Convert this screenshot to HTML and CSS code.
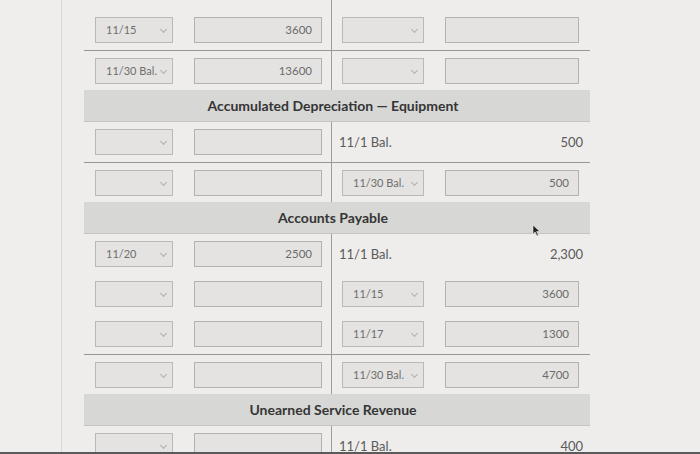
FILE: index.html
```html
<!DOCTYPE html>
<html lang="en">
<head>
<meta charset="utf-8">
<title>T-Accounts</title>
<link rel="stylesheet" href="styles.css">
</head>
<body>
<div class="page">
  <aside class="side"></aside>
  <main class="main">
    <div class="ledger">
      <div class="trow spacer"><div class="half left"></div><div class="half right"></div></div>
      <div class="trow">
        <div class="half left">
          <div class="sel">11/15<span class="chev"></span></div>
          <div class="inp">3600</div>
        </div>
        <div class="half right">
          <div class="sel wide"><span class="chev"></span></div>
          <div class="inp wide"></div>
        </div>
      </div>
      <div class="trow rule">
        <div class="half left">
          <div class="sel">11/30 Bal.<span class="chev"></span></div>
          <div class="inp">13600</div>
        </div>
        <div class="half right">
          <div class="sel wide"><span class="chev"></span></div>
          <div class="inp wide"></div>
        </div>
      </div>

      <div class="thead">Accumulated Depreciation — Equipment</div>
      <div class="trow">
        <div class="half left">
          <div class="sel"><span class="chev"></span></div>
          <div class="inp"></div>
        </div>
        <div class="half right text">
          <span class="lbl">11/1 Bal.</span><span class="val">500</span>
        </div>
      </div>
      <div class="trow rule">
        <div class="half left">
          <div class="sel"><span class="chev"></span></div>
          <div class="inp"></div>
        </div>
        <div class="half right">
          <div class="sel wide">11/30 Bal.<span class="chev"></span></div>
          <div class="inp wide">500</div>
        </div>
      </div>

      <div class="thead">Accounts Payable</div>
      <div class="trow">
        <div class="half left">
          <div class="sel">11/20<span class="chev"></span></div>
          <div class="inp">2500</div>
        </div>
        <div class="half right text">
          <span class="lbl">11/1 Bal.</span><span class="val">2,300</span>
        </div>
      </div>
      <div class="trow">
        <div class="half left">
          <div class="sel"><span class="chev"></span></div>
          <div class="inp"></div>
        </div>
        <div class="half right">
          <div class="sel wide">11/15<span class="chev"></span></div>
          <div class="inp wide">3600</div>
        </div>
      </div>
      <div class="trow">
        <div class="half left">
          <div class="sel"><span class="chev"></span></div>
          <div class="inp"></div>
        </div>
        <div class="half right">
          <div class="sel wide">11/17<span class="chev"></span></div>
          <div class="inp wide">1300</div>
        </div>
      </div>
      <div class="trow rule">
        <div class="half left">
          <div class="sel"><span class="chev"></span></div>
          <div class="inp"></div>
        </div>
        <div class="half right">
          <div class="sel wide">11/30 Bal.<span class="chev"></span></div>
          <div class="inp wide">4700</div>
        </div>
      </div>

      <div class="thead">Unearned Service Revenue</div>
      <div class="trow">
        <div class="half left">
          <div class="sel"><span class="chev"></span></div>
          <div class="inp"></div>
        </div>
        <div class="half right text">
          <span class="lbl">11/1 Bal.</span><span class="val">400</span>
        </div>
      </div>
    </div>
  </main>
  <svg class="cursor" width="9" height="13" viewBox="0 0 9 13"><path d="M1 1 L1 10 L3.2 8 L5 12 L6.4 11.3 L4.7 7.5 L7.8 7.5 Z" fill="#222" stroke="#eee" stroke-width="0.6"/></svg>
  <div class="bezel"></div>
</div>
</body>
</html>
```

FILE: styles.css
```css
html, body {
  margin: 0;
  padding: 0;
}
body {
  background: #eeedeb;
  font-family: Lato, "Open Sans", "Liberation Sans", sans-serif;
  color: #555;
  overflow: hidden;
}
.page {
  position: relative;
  display: flex;
  width: 700px;
  height: 454px;
  overflow: hidden;
}
.side {
  width: 61px;
  flex: none;
  background: #efeeed;
  border-right: 1px solid #dad9d7;
}
.main {
  flex: 1;
  padding-left: 22px;
}
.ledger {
  width: 506px;
}
.trow {
  display: grid;
  grid-template-columns: 248px 258px;
  height: 40px;
}
.trow.spacer {
  height: 10px;
}
.trow.rule {
  border-top: 1px solid #979795;
  height: 39px;
}
.half {
  display: flex;
  align-items: center;
  gap: 21px;
}
.half.left {
  border-right: 1px solid #9e9e9c;
  padding-left: 11px;
}
.half.right {
  padding-left: 10px;
}
.sel {
  position: relative;
  box-sizing: border-box;
  width: 78px;
  height: 26px;
  background: #e4e3e1;
  border: 1px solid #bab9b7;
  font-size: 11px;
  color: #6e6e6e;
  line-height: 24px;
  padding-left: 10px;
  white-space: nowrap;
}
.sel.wide {
  width: 82px;
}
.chev {
  position: absolute;
  right: 6px;
  top: 9px;
  width: 4px;
  height: 4px;
  border-right: 1px solid #b0b0ae;
  border-bottom: 1px solid #b0b0ae;
  transform: rotate(45deg);
}
.inp {
  box-sizing: border-box;
  width: 128px;
  height: 26px;
  background: #e4e3e1;
  border: 1px solid #b3b2b0;
  font-size: 11.5px;
  color: #6b6b6b;
  line-height: 24px;
  text-align: right;
  padding-right: 9px;
}
.inp.wide {
  width: 134px;
}
.half.text {
  justify-content: space-between;
  padding-left: 7px;
  padding-right: 7px;
  font-size: 13px;
  color: #5a5a5a;
}
.thead {
  box-sizing: border-box;
  height: 32px;
  background: #d7d7d5;
  border-bottom: 1px solid #c4c4c2;
  font-weight: 700;
  font-size: 14px;
  color: #353535;
  text-align: center;
  line-height: 31px;
  padding-right: 8px;
}
.cursor {
  position: absolute;
  left: 532px;
  top: 224px;
}
.bezel {
  position: absolute;
  left: 0;
  right: 0;
  bottom: 0;
  height: 2px;
  background: #5a5a5a;
}
```
